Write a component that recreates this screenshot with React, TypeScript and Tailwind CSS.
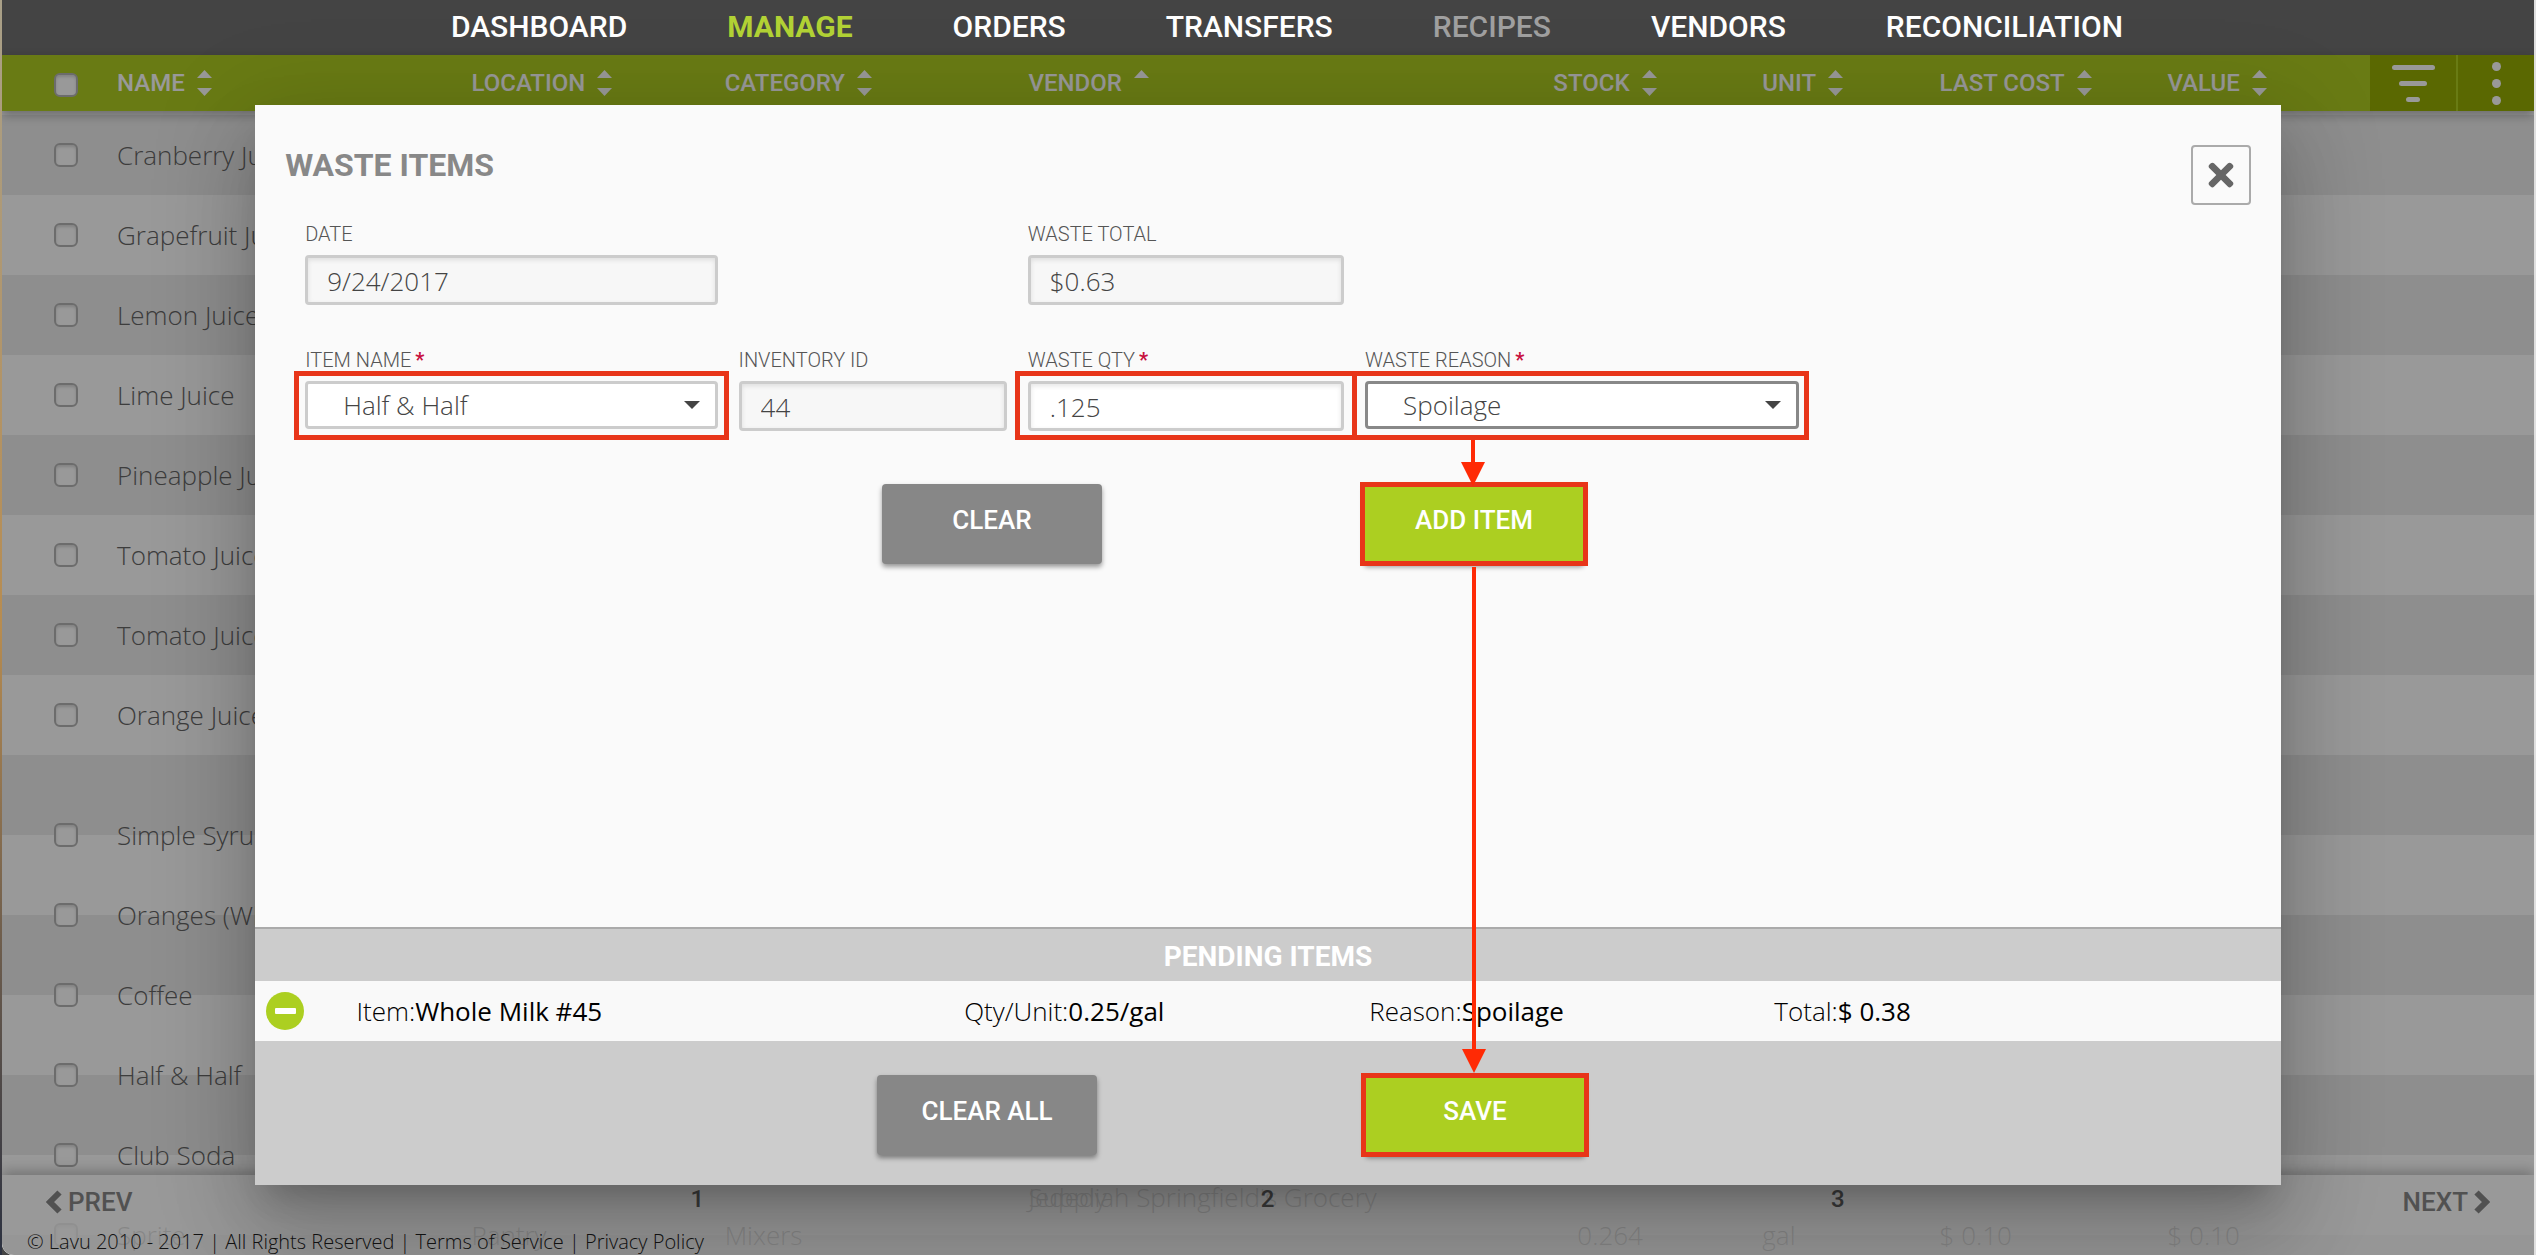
import { useState } from "react"
import { FaTimes } from "react-icons/fa"

interface StockRow {
  name: string
  location?: string
  category?: string
  vendors?: string[]
  stock?: string
  unit?: string
  cost?: string
  value?: string
  tall?: boolean
}

const navItems = ["DASHBOARD", "MANAGE", "ORDERS", "TRANSFERS", "RECIPES", "VENDORS", "RECONCILIATION"]

const columns = [
  { label: "NAME", width: "w-[14%]" },
  { label: "LOCATION", width: "w-[10%]" },
  { label: "CATEGORY", width: "w-[12%]" },
  { label: "VENDOR", width: "", sorted: true },
  { label: "STOCK", width: "w-[209px]" },
  { label: "UNIT", width: "w-[7%]" },
  { label: "LAST COST", width: "w-[9%]" },
  { label: "VALUE", width: "w-[8%]" },
]

const rows: StockRow[] = [
  { name: "Cranberry Juice" },
  { name: "Grapefruit Juice" },
  { name: "Lemon Juice" },
  { name: "Lime Juice" },
  { name: "Pineapple Juice" },
  { name: "Tomato Juice" },
  { name: "Tomato Juice" },
  { name: "Orange Juice" },
  { name: "Simple Syrup", tall: true },
  { name: "Oranges (Whole)" },
  { name: "Coffee" },
  { name: "Half & Half" },
  { name: "Club Soda" },
  {
    name: "Sprite",
    location: "Pantry",
    category: "Mixers",
    vendors: ["Jedediah Springfield's Grocery", "Supply"],
    stock: "0.264",
    unit: "gal",
    cost: "$ 0.10",
    value: "$ 0.10",
  },
]

const checkboxClass =
  "block size-6 appearance-none rounded-md border-2 border-[#b5b5b5] bg-white shadow-[inset_0_2px_3px_rgba(0,0,0,0.15)]"

const inputClass =
  "h-[50px] w-full rounded border-[3px] border-[#ccc] pl-[19px] pt-[2px] text-[26px] font-light text-[#444] shadow-[inset_0_2px_5px_rgba(0,0,0,0.1)] outline-none"

function SortIcon({ single }: { single?: boolean }) {
  return (
    <svg width="15" height="26" viewBox="0 0 15 26" fill="currentColor">
      <path d="M7.5 0 15 8H0z" />
      {!single && <path d="M7.5 26 0 18h15z" />}
    </svg>
  )
}

function Chevron({ right }: { right?: boolean }) {
  return (
    <svg width="16" height="24" viewBox="0 0 16 24" fill="none" stroke="currentColor" strokeWidth="6">
      <path d={right ? "M2.5 2.5 12 12 2.5 21.5" : "M13.5 2.5 4 12l9.5 9.5"} />
    </svg>
  )
}

function Label({ htmlFor, text, required }: { htmlFor: string; text: string; required?: boolean }) {
  return (
    <label
      htmlFor={htmlFor}
      className="mb-[9px] block h-6 whitespace-nowrap font-[Roboto,sans-serif] text-xl leading-6 font-light text-[#555]"
    >
      {text}
      {required && <span className="ml-1 font-bold text-[#c8103f]">*</span>}
    </label>
  )
}

function SelectBox({ id, options, dark }: { id: string; options: string[]; dark?: boolean }) {
  return (
    <div className="relative">
      <select
        id={id}
        className={`block h-12 w-full appearance-none rounded border-[3px] bg-white pl-[35px] text-[26px] font-light text-[#444] outline-none ${
          dark ? "border-[#888]" : "border-[#ccc]"
        }`}
      >
        {options.map((o) => (
          <option key={o}>{o}</option>
        ))}
      </select>
      <svg className="pointer-events-none absolute top-5 right-[18px]" width="16" height="8" viewBox="0 0 16 8" fill="#444">
        <path d="M0 0h16L8 8z" />
      </svg>
    </div>
  )
}

// Red callout frame drawn round its relative parent
function Frame({ className }: { className: string }) {
  return <span className={`pointer-events-none absolute border-[5px] border-[#e83519] ${className}`} />
}

function Arrow({ className }: { className: string }) {
  return (
    <div className={`pointer-events-none absolute z-10 flex w-6 flex-col items-center ${className}`}>
      <span className="w-1 grow bg-[#ff2a05]" />
      <svg width="24" height="24" viewBox="0 0 24 24" fill="#ff2a05">
        <path d="M0 0h24L12 24z" />
      </svg>
    </div>
  )
}

function ActionButton({ label, green }: { label: string; green?: boolean }) {
  return (
    <div className="relative">
      <button
        className={`block h-20 w-[220px] rounded pb-2 font-[Roboto,sans-serif] text-[26px] font-medium text-white shadow-[0_3px_5px_rgba(0,0,0,0.4)] ${
          green ? "bg-[#accf21]" : "bg-[#878787]"
        }`}
      >
        {label}
      </button>
      {green && <Frame className="-inset-x-1 -inset-y-[2px]" />}
    </div>
  )
}

function InventoryTable() {
  return (
    <table className="w-full table-fixed border-collapse bg-[linear-gradient(#ededed_50%,#fff_50%)] bg-[length:100%_160px] bg-[position:0_60px] text-left text-[26px] font-light text-[#666]">
      <thead className="bg-[#afcd22] font-[Roboto,sans-serif] text-2xl text-white shadow-[0_4px_10px_rgba(0,0,0,0.3)]">
        <tr className="h-14">
          <th className="w-[115px] pt-1 pl-[52px]">
            <input type="checkbox" aria-label="Select all" className={checkboxClass} />
          </th>
          {columns.map((c) => (
            <th key={c.label} className={`p-0 font-medium ${c.width}`}>
              <button className="flex items-center gap-3 whitespace-nowrap">
                {c.label}
                <SortIcon single={c.sorted} />
              </button>
            </th>
          ))}
          <th className="w-[164px] p-0">
            <div className="flex h-14 bg-[#96ad03]">
              <button aria-label="Filter" className="flex w-[88px] flex-col items-center justify-center gap-[11px] border-r-2 border-[#afcd22]">
                <span className="h-[5px] w-[43px] rounded-full bg-white" />
                <span className="h-[5px] w-[28px] rounded-full bg-white" />
                <span className="h-[5px] w-[14px] rounded-full bg-white" />
              </button>
              <button aria-label="More" className="flex grow flex-col items-center justify-center gap-2">
                <span className="size-[9px] rounded-full bg-white" />
                <span className="size-[9px] rounded-full bg-white" />
                <span className="size-[9px] rounded-full bg-white" />
              </button>
            </div>
          </th>
        </tr>
      </thead>
      <tbody className="before:block before:h-1 before:content-['']">
        {rows.map((r, i) => (
          <tr key={i} className={`whitespace-nowrap ${r.tall ? "h-[120px] [&>td]:pt-10" : "h-20"}`}>
            <td className="p-0 pl-[52px]">
              <input type="checkbox" aria-label={r.name} className={checkboxClass} />
            </td>
            <td className="p-0">{r.name}</td>
            <td className="p-0">{r.location}</td>
            <td className="p-0">{r.category}</td>
            <td className="p-0 align-top">
              {r.vendors && (
                <div className="relative -top-4 grid leading-9">
                  {r.vendors.map((v) => (
                    <span key={v} className="col-start-1 row-start-1">{v}</span>
                  ))}
                </div>
              )}
            </td>
            <td className="p-0 pl-6">{r.stock}</td>
            <td className="p-0">{r.unit}</td>
            <td className="p-0">{r.cost}</td>
            <td className="p-0">{r.value}</td>
            <td />
          </tr>
        ))}
      </tbody>
    </table>
  )
}

function WasteModal() {
  const [date, setDate] = useState("9/24/2017")
  const [qty, setQty] = useState(".125")

  return (
    <div className="relative mx-auto flex h-full w-4/5 flex-col bg-[#fafafa] shadow-[0_22px_30px_-14px_rgba(0,0,0,0.2),0_48px_76px_6px_rgba(0,0,0,0.14),0_18px_92px_16px_rgba(0,0,0,0.12)]">
      <div className="flex items-start justify-between px-[30px] pt-10">
        <h2 className="font-[Roboto,sans-serif] text-[32px] leading-10 font-bold text-[#888]">WASTE ITEMS</h2>
        <button aria-label="Close" className="flex size-[60px] items-center justify-center rounded border-2 border-[#aaa] text-[#666]">
          <FaTimes size={36} />
        </button>
      </div>

      <div className="mt-[17px] grid grid-cols-[412fr_268fr_316fr_434fr_410fr] gap-x-[21px] gap-y-[43px] px-[50px]">
        <div>
          <Label htmlFor="date" text="DATE" />
          <input id="date" value={date} onChange={(e) => setDate(e.target.value)} className={`bg-[#f7f7f7] ${inputClass}`} />
        </div>
        <div className="col-start-3">
          <Label htmlFor="total" text="WASTE TOTAL" />
          <input id="total" readOnly value="$0.63" className={`bg-[#f7f7f7] ${inputClass}`} />
        </div>

        <div className="col-start-1">
          <Label htmlFor="item" text="ITEM NAME" required />
          <div className="relative">
            <SelectBox id="item" options={["Half & Half", "Whole Milk"]} />
            <Frame className="-inset-x-[11px] -top-[10px] -bottom-[11px]" />
          </div>
        </div>
        <div>
          <Label htmlFor="inventory" text="INVENTORY ID" />
          <input id="inventory" readOnly value="44" className={`bg-[#f7f7f7] ${inputClass}`} />
        </div>
        <div>
          <Label htmlFor="qty" text="WASTE QTY" required />
          <div className="relative">
            <input id="qty" value={qty} onChange={(e) => setQty(e.target.value)} className={`block bg-white ${inputClass}`} />
            <Frame className="-inset-x-[13px] -top-[10px] -bottom-[9px]" />
          </div>
        </div>
        <div>
          <Label htmlFor="reason" text="WASTE REASON" required />
          <div className="relative">
            <SelectBox id="reason" options={["Spoilage", "Spill"]} dark />
            <Frame className="-right-[10px] -left-[13px] -top-[10px] -bottom-[11px]" />
            <Arrow className="top-[59px] left-24 h-[46px]" />
          </div>
        </div>
      </div>

      <div className="mt-[53px] flex justify-center gap-[262px] pr-[70px]">
        <ActionButton label="CLEAR" />
        <ActionButton label="ADD ITEM" green />
      </div>

      <section className="mt-auto border-t-2 border-[#aaa] bg-[#ccc]">
        <h3 className="pt-1 text-center font-[Roboto,sans-serif] text-[28px] leading-[48px] font-bold text-white">PENDING ITEMS</h3>
        <div className="grid h-[60px] grid-cols-[5%_30%_20%_20%_25%] items-center bg-[#f9f9f9] text-[26px] whitespace-nowrap text-black">
          <button aria-label="Remove item" className="ml-[11px] flex size-[38px] items-center justify-center rounded-full bg-[#accf21]">
            <span className="h-[6px] w-[21px] rounded-[1px] bg-white" />
          </button>
          <p><span className="font-light">Item:</span>Whole Milk #45</p>
          <p><span className="font-light">Qty/Unit:</span>0.25/gal</p>
          <p><span className="font-light">Reason:</span>Spoilage</p>
          <p><span className="font-light">Total:</span>$ 0.38</p>
        </div>
        <div className="flex justify-center gap-[268px] pt-[34px] pr-[74px] pb-[30px]">
          <ActionButton label="CLEAR ALL" />
          <ActionButton label="SAVE" green />
        </div>
      </section>

      <Arrow className="top-[462px] bottom-[112px] left-[1207px]" />
    </div>
  )
}

export default function App() {
  return (
    <div className="flex h-screen overflow-hidden bg-[#444] font-['Open_Sans',sans-serif]">
      <div className="w-[2px] shrink-0 bg-linear-to-b from-[#a9a088] via-[#b78c50] to-[#2c3140]" />

      <div className="relative min-w-0 grow overflow-hidden rounded-bl-xl bg-white">
        <nav className="flex h-[55px] items-center justify-center gap-[100px] bg-[#444] pb-[2px] pl-[38px] font-[Roboto,sans-serif] text-3xl font-medium text-white">
          {navItems.map((n) => (
            <a
              key={n}
              href="#"
              className={n === "MANAGE" ? "font-bold text-[#b2d235]" : n === "RECIPES" ? "text-[#a0a0a0]" : ""}
            >
              {n}
            </a>
          ))}
        </nav>

        <InventoryTable />

        <footer className="absolute inset-x-0 bottom-0 h-20 bg-white/80 shadow-[0_-4px_12px_rgba(0,0,0,0.25)]">
          <div className="flex h-[54px] items-center justify-between px-11 font-[Roboto,sans-serif] text-[26px] font-medium text-[#888]">
            <button className="flex items-center gap-[6px]">
              <Chevron />
              PREV
            </button>
            <div className="grid w-[70%] shrink-0 grid-cols-3 pb-[6px] text-center text-2xl text-[#666]">
              <a href="#">1</a>
              <a href="#">2</a>
              <a href="#">3</a>
            </div>
            <button className="flex items-center gap-[6px]">
              NEXT
              <Chevron right />
            </button>
          </div>
          <p className="pl-[25px] text-xl leading-[26px] font-light text-[#222]">
            © Lavu 2010 - 2017 | All Rights Reserved | <a href="#">Terms of Service</a> | <a href="#">Privacy Policy</a>
          </p>
        </footer>

        <div className="absolute inset-x-0 top-[55px] bottom-0 bg-black/40 pt-[50px] pb-[70px]">
          <WasteModal />
        </div>
      </div>

      <div className="w-[2px] shrink-0 bg-[#e0e0e0]" />
    </div>
  )
}
